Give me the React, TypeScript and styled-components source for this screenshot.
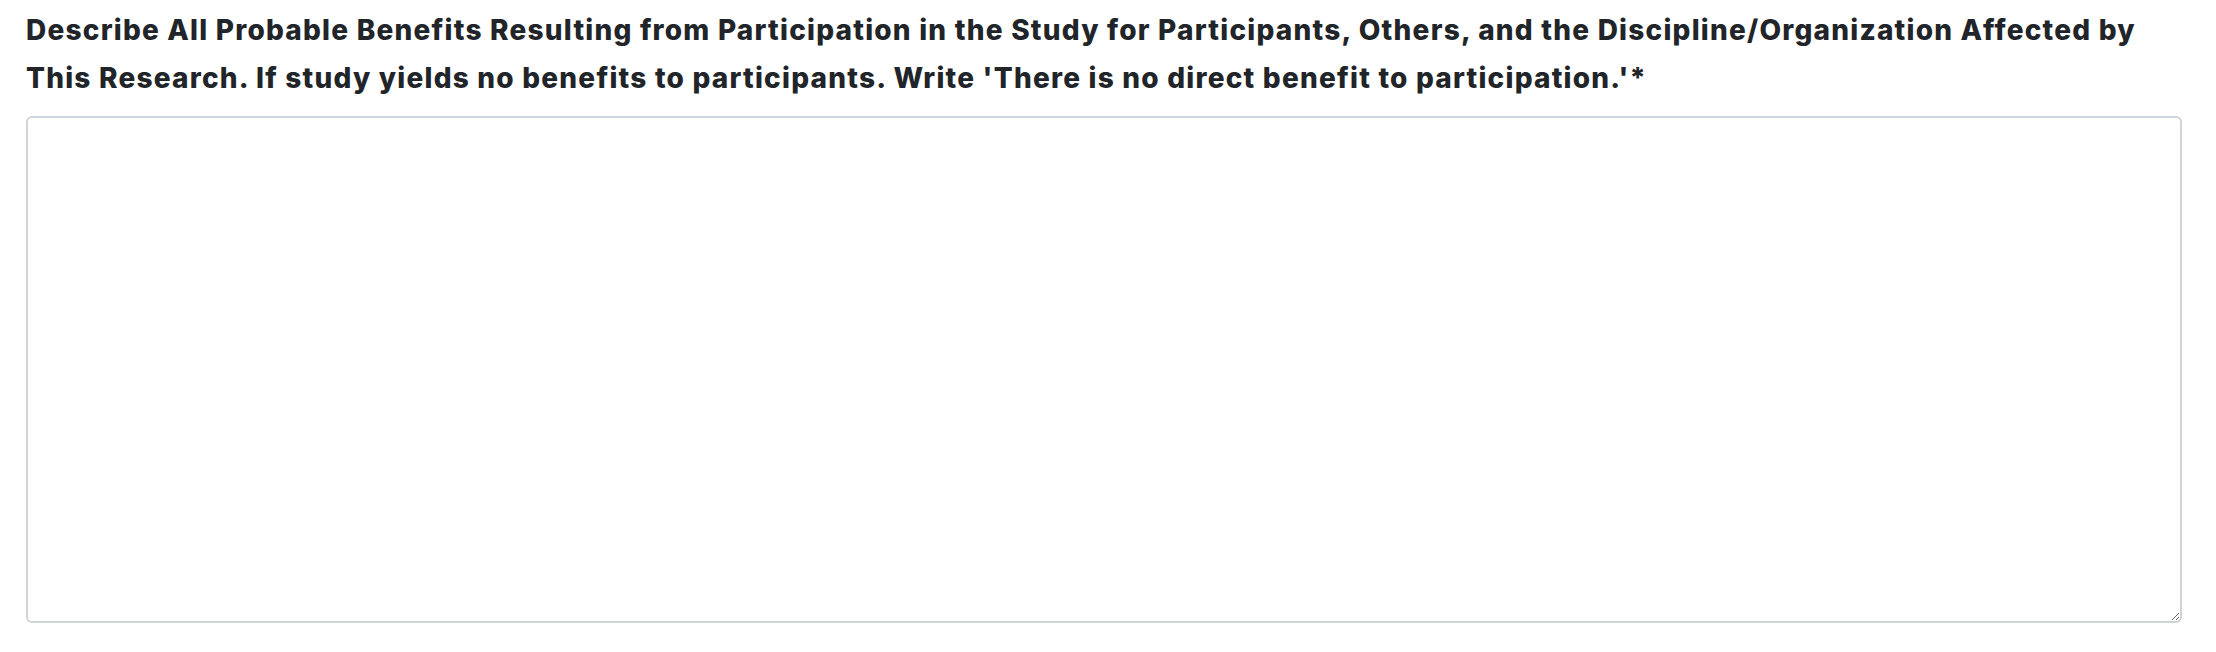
import React from "react";
import styled, { createGlobalStyle } from "styled-components";

const GlobalStyle = createGlobalStyle`
  html, body { margin: 0; padding: 0; background: #ffffff; }
  * { box-sizing: border-box; }
`;

const Page = styled.div`
  padding: 6px 34px 0 26px;
  font-family: Inter, Roboto, "Liberation Sans", sans-serif;
`;

const Field = styled.div`
  display: flex;
  flex-direction: column;
  gap: 14px;
`;

const Label = styled.label`
  font-size: 28px;
  line-height: 48px;
  font-weight: 800;
  color: #212529;
  letter-spacing: 1.22px;
`;

const TextArea = styled.textarea`
  display: block;
  width: 100%;
  height: 507px;
  border: 2px solid #ced4da;
  border-radius: 6px;
  background: #ffffff;
  font-family: inherit;
  font-size: 24px;
  padding: 10px 14px;
  resize: vertical;
  outline: none;
`;

export default function App() {
  return (
    <>
      <GlobalStyle />
      <Page>
        <Field>
          <Label htmlFor="benefits">
            Describe All Probable Benefits Resulting from Participation in the Study for Participants,
            Others, and the Discipline/Organization Affected by This Research. If study yields no
            benefits to participants. Write 'There is no direct benefit to participation.'*
          </Label>
          <TextArea id="benefits" />
        </Field>
      </Page>
    </>
  );
}
